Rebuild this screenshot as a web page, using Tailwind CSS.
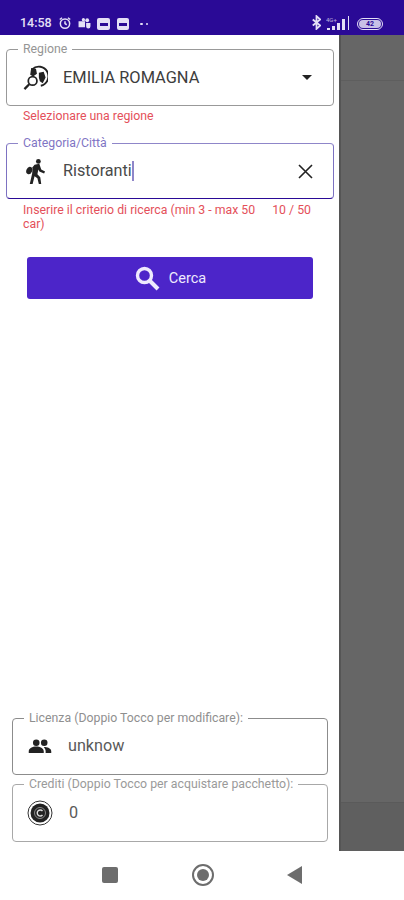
<!DOCTYPE html>
<html lang="en">
<head>
  <meta charset="UTF-8" />
  <meta name="viewport" content="width=device-width, initial-scale=1.0"/>
  <title>Ricerca</title>
  <script src="https://cdn.jsdelivr.net/npm/@tailwindcss/browser@4"></script>
</head>
<body class="bg-white font-['Roboto',sans-serif]">
<div class="w-[404px] h-[900px] flex flex-col overflow-hidden">

  <!-- Status bar -->
  <header class="h-[35px] shrink-0 bg-[#2a0a96] text-[#e4e0f6] flex items-end pb-[5px] pl-[20px] pr-[21px]">
    <span class="text-[12.5px] font-medium leading-[14px] w-[35px]">14:58</span>
    <svg class="w-[14px] h-[14px] ml-[3px]" viewBox="0 0 24 24" fill="none" stroke="currentColor" stroke-width="2.6"><circle cx="12" cy="13" r="8"/><path d="M12 9v4l3 2M3 6l4-3M21 6l-4-3"/></svg>
    <svg class="w-[15px] h-[13px] ml-[5px]" viewBox="0 0 24 24" fill="currentColor"><circle cx="17" cy="6" r="3.500"/><circle cx="10" cy="5" r="3"/><path d="M1 8h12v11H1zM15 11h8v6a4 4 0 0 1-8 0z"/></svg>
    <div class="w-[13px] h-[12px] ml-[5px] rounded-[2px] bg-current flex items-center justify-center"><div class="w-[8px] h-[3px] bg-[#2a0a96]"></div></div>
    <div class="w-[12px] h-[12px] ml-[7px] rounded-[2px] bg-current flex items-center justify-center"><div class="w-[8px] h-[3px] bg-[#2a0a96]"></div></div>
    <div class="flex gap-[3px] ml-[11px] mb-[5px]"><div class="w-[2.500px] h-[2.500px] rounded-full bg-current"></div><div class="w-[2.500px] h-[2.500px] rounded-full bg-current"></div></div>
    <div class="ml-auto flex items-end">
      <svg class="w-[9px] h-[15px]" viewBox="0 0 12 20" fill="none" stroke="currentColor" stroke-width="2.400"><path d="M1 6l10 8-5 4.500V1.500L11 6 1 14"/></svg>
      <svg class="w-[24px] h-[14px] ml-[5px]" viewBox="0 0 24 14" fill="currentColor"><text x="0" y="6" font-size="6" font-family="Roboto" opacity=".75">4G+</text><path d="M1 14v-2h3v2zM6 14v-4h3v4zM11 14V7h3v7zM16 14V3h3v11zM22 14V0h1v14z"/></svg>
      <div class="w-[26px] h-[12px] ml-[7px] rounded-full border border-current flex items-center justify-center p-[1px]"><div class="w-full h-full rounded-full bg-[#e4e0f6]/85 flex justify-center items-center text-[#2a0a96] text-[7px] font-bold leading-none">42</div></div>
    </div>
  </header>

  <div class="flex-1 flex min-h-0">
    <!-- Drawer -->
    <aside class="w-[339px] shrink-0 bg-white flex flex-col">
      <div class="pt-[14px] pl-[6px] pr-[5px]">
        <div class="relative h-[57px] border border-[#999] rounded-[4px] flex items-center pl-[16px] pr-[21px]">
          <span class="absolute -top-[8px] left-[11px] px-[5px] bg-white text-[12.3px] leading-[14px] text-[#959595]">Regione</span>
          <svg class="w-[25px] h-[26px] shrink-0" viewBox="0 0 25 27" fill="none" stroke="#222">
            <path d="M9 4.500a10 10 0 1 1 9 17" stroke-width="2"/>
            <path d="M8 3l5 1 1 5-4 3-3-2zM16 8l5-1 2 6-3 6-3-2-1-4z" fill="#222" stroke="none"/>
            <circle cx="9.500" cy="16.500" r="4.500" stroke-width="1.800"/>
            <path d="M6 20l-5 5" stroke-width="2.400"/>
          </svg>
          <span class="ml-[15px] mt-[1px] text-[16.4px] text-[#3d3d3d]">EMILIA ROMAGNA</span>
          <div class="ml-auto w-0 h-0 border-x-[5px] border-x-transparent border-t-[5px] border-t-[#222]"></div>
        </div>
        <p class="mt-[3px] ml-[17px] text-[12.3px] leading-[14px] text-[#e4505a]">Selezionare una regione</p>

        <div class="relative mt-[20px] h-[56px] border-[1.5px] border-[#2a0a96] border-t-[#8f86c9] border-x-[#7d72c2] rounded-[4px] flex items-center pl-[18px] pr-[20px]">
          <span class="absolute -top-[8px] left-[11px] px-[5px] bg-white text-[12.3px] leading-[14px] text-[#7f75c4]">Categoria/Città</span>
          <svg class="w-[21px] h-[26px] shrink-0" viewBox="0 0 22 27" fill="#222">
            <circle cx="14" cy="3.500" r="2.500"/>
            <path d="M10 7l5-1 2 6 4 2-1 2-5-2-1-2-1 5 3 3 1 7h-2.500l-1.500-6-3-2-2 8H5l2.500-11L8 10l-2 2z"/>
            <ellipse cx="4.500" cy="13" rx="3" ry="4" transform="rotate(25 4.500 13)"/>
          </svg>
          <span class="ml-[17px] text-[16.2px] text-[#4a4a4a]">Ristoranti</span>
          <div class="w-[2px] h-[20px] bg-[#8f86c9]"></div>
          <svg class="ml-auto w-[15px] h-[15px]" viewBox="0 0 15 15" fill="none" stroke="#222" stroke-width="1.600"><path d="M1 1l13 13M14 1L1 14"/></svg>
        </div>
        <div class="mt-[4px] ml-[17px] mr-[23px] flex justify-between text-[12.3px] leading-[14px] text-[#e4505a]">
          <p class="w-[236px]">Inserire il criterio di ricerca (min 3 - max 50 car)</p>
          <span class="whitespace-nowrap">10 / 50</span>
        </div>
      </div>

      <button class="mt-[26px] ml-[27px] w-[286px] h-[42px] rounded-[3px] bg-[#4c25c9] text-[#eeeafd] flex items-center justify-center text-[14.5px]">
        <svg class="w-[26px] h-[26px] mr-[9px]" viewBox="0 0 26 26" fill="none" stroke="currentColor"><circle cx="10.500" cy="10.500" r="7" stroke-width="3.400"/><path d="M16 16l8 8" stroke-width="4"/></svg>
        <span class="mt-[1px]">Cerca</span>
      </button>

      <div class="mt-auto pl-[12px] pr-[11px] pb-[9px]">
        <div class="relative h-[57px] border border-[#8c8c8c] rounded-[4px] flex items-center pl-[15px]">
          <span class="absolute -top-[8px] left-[11px] px-[5px] bg-white text-[12.3px] leading-[14px] text-[#8f8f8f]">Licenza (Doppio Tocco per modificare):</span>
          <svg class="w-[24px] h-[15px] shrink-0" viewBox="0 0 24 16" fill="#222"><circle cx="8" cy="4" r="3.500"/><circle cx="16.500" cy="4" r="3.500"/><path d="M0 15v-2c0-3 4-5 8-5s8 2 8 5v2zM18 15v-2c0-2-1-3-2-4.500 4 0 8 1.500 8 4.500v2z"/></svg>
          <span class="ml-[16px] text-[16.2px] text-[#5a5a5a]">unknow</span>
        </div>
        <div class="relative mt-[9px] h-[58px] border border-[#a8a8a8] rounded-[4px] flex items-center pl-[14px]">
          <span class="absolute -top-[8px] left-[11px] px-[5px] bg-white text-[12.3px] leading-[14px] text-[#9a9a9a]">Crediti (Doppio Tocco per acquistare pacchetto):</span>
          <svg class="w-[26px] h-[26px] shrink-0" viewBox="0 0 26 26" fill="none"><circle cx="13" cy="13" r="12" stroke="#333"/><circle cx="13" cy="13" r="9.500" fill="#222"/><circle cx="13" cy="13" r="5.500" stroke="#888"/><path d="M15.500 11a3 3 0 1 0 0 4" stroke="#ddd" stroke-width="1.400"/></svg>
          <span class="ml-[16px] text-[16.2px] text-[#5a5a5a]">0</span>
        </div>
      </div>
    </aside>

    <!-- Dimmed page behind the drawer -->
    <div class="flex-1 bg-[#666666] border-l-2 border-[#555] flex flex-col">
      <div class="h-[46px] border-b border-[#5e5e5e]"></div>
      <div class="flex-1 border-b border-[#5a5a5a]"></div>
      <div class="h-[48px] bg-[#5f5f5f]"></div>
    </div>
  </div>

  <!-- Android nav bar -->
  <nav class="h-[49px] shrink-0 bg-white relative flex items-center pb-[1px]">
    <div class="ml-[102px] w-[16px] h-[16px] rounded-[2px] bg-[#6d6d6d]"></div>
    <div class="ml-[74px] w-[22px] h-[22px] rounded-full border-2 border-[#6d6d6d] flex items-center justify-center"><div class="w-[12px] h-[12px] rounded-full bg-[#6d6d6d]"></div></div>
    <div class="ml-[73px] w-0 h-0 border-y-[9px] border-y-transparent border-r-[15px] border-r-[#6d6d6d]"></div>
  </nav>
</div>
</body>
</html>
